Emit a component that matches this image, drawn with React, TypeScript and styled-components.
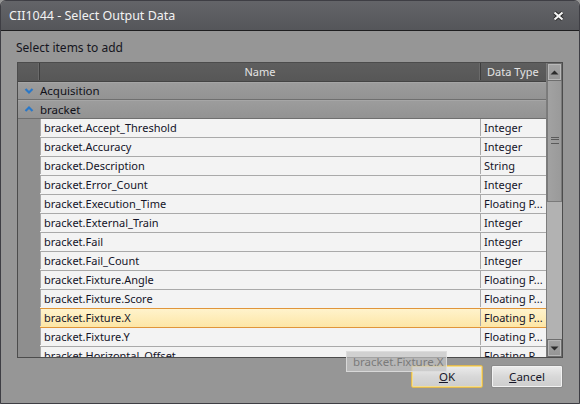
import React from "react";
import styled, { createGlobalStyle } from "styled-components";

const GlobalStyle = createGlobalStyle`
  html, body {
    margin: 0;
    padding: 0;
    background: #969696;
  }
  * {
    box-sizing: border-box;
  }
`;

const FONT = `"Noto Sans", "Open Sans", "DejaVu Sans", sans-serif`;

const Window = styled.div`
  position: relative;
  width: 580px;
  height: 404px;
  background: #969696;
  border: 1px solid #3e3e44;
  border-radius: 6px 6px 0 0;
  overflow: hidden;
  display: flex;
  flex-direction: column;
  font-family: ${FONT};
  font-size: 11px;
`;

const TitleBar = styled.div`
  height: 30px;
  flex: none;
  display: flex;
  align-items: center;
  justify-content: space-between;
  padding: 0 15px 0 8px;
  background: linear-gradient(#636468, #55565a);
  border-bottom: 1px solid #1e1e20;
  color: #f2f2f2;
  font-size: 12.5px;
`;

const CloseButton = styled.button`
  width: 12px;
  height: 12px;
  padding: 0;
  border: none;
  background: none;
  display: flex;
  align-items: center;
  justify-content: center;
`;

const Body = styled.div`
  flex: 1;
  display: flex;
  flex-direction: column;
  padding: 9px 16px 0 15px;
`;

const Label = styled.div`
  color: #151520;
  font-size: 12px;
  line-height: 16px;
  height: 16px;
`;

const Grid = styled.div`
  margin-top: 6px;
  margin-left: 1px;
  width: 546px;
  height: 296px;
  border: 1px solid #4c4c4c;
  display: flex;
  overflow: hidden;
`;

const GridMain = styled.div`
  flex: 1;
  display: flex;
  flex-direction: column;
  overflow: hidden;
  background: #8e8e8e;
`;

const HeaderRow = styled.div`
  height: 19px;
  flex: none;
  display: flex;
  background: linear-gradient(#5e5e5e, #575757);
  border-bottom: 1px solid #444;
  color: #e4e4e4;
  padding-bottom: 1px;
`;

const HeaderCell = styled.div<{ $w?: number; $center?: boolean }>`
  ${(p) => (p.$w ? `width: ${p.$w}px; flex: none;` : "flex: 1;")}
  display: flex;
  align-items: center;
  justify-content: ${(p) => (p.$center ? "center" : "flex-start")};
  padding-left: ${(p) => (p.$center ? 0 : 6)}px;
  border-right: 1px solid #3e3e3e;
  box-shadow: inset -1px 0 0 #6a6a6a;
  &:last-child {
    border-right: none;
    box-shadow: none;
  }
`;

const GroupRow = styled.div<{ $h: number }>`
  height: ${(p) => p.$h}px;
  flex: none;
  display: flex;
  align-items: center;
  padding-bottom: 1px;
  background: linear-gradient(#9c9c9c, #939393);
  border-top: 1px solid #a6a6a6;
  border-bottom: 1px solid #6f6f6f;
  color: #101018;
  font-size: 11.5px;
`;

const GroupIcon = styled.div`
  width: 22px;
  flex: none;
  display: flex;
  justify-content: center;
`;

const DataRow = styled.div<{ $selected?: boolean }>`
  height: 19px;
  flex: none;
  display: flex;
  margin-left: 22px;
  padding-bottom: 1px;
  color: #141428;
  background: ${(p) =>
    p.$selected ? "linear-gradient(#fff3cc, #fde6a6)" : "#f3f3f3"};
  border-bottom: 1px solid ${(p) => (p.$selected ? "#e0953a" : "#a9a9a9")};
  ${(p) => (p.$selected ? "border-top: 1px solid #e0953a; margin-top: -1px; height: 20px;" : "")}
`;

const NameCell = styled.div`
  width: 440px;
  flex: none;
  display: flex;
  align-items: center;
  padding-left: 3px;
  white-space: nowrap;
  border-left: 1px solid #a9a9a9;
`;

const TypeCell = styled.div`
  flex: 1;
  display: flex;
  align-items: center;
  padding-left: 3px;
  white-space: nowrap;
  overflow: hidden;
  border-left: 1px solid #a9a9a9;
`;

const ScrollBar = styled.div`
  width: 16px;
  flex: none;
  display: flex;
  flex-direction: column;
  background: #b2b2b2;
  border-left: 1px solid #7c7c7c;
`;

const ScrollButton = styled.div`
  height: 18px;
  flex: none;
  display: flex;
  align-items: center;
  justify-content: center;
  background: linear-gradient(#a4a4a4, #959595);
  border: 1px solid #6e6e6e;
  box-shadow: inset 0 0 0 1px #b8b8b8;
`;

const Thumb = styled.div`
  height: 121px;
  flex: none;
  display: flex;
  align-items: center;
  justify-content: center;
  background: linear-gradient(90deg, #a2a2a2, #9a9a9a);
  border: 1px solid #7a7a7a;
  border-top: none;
  margin-bottom: auto;
`;

const Grip = styled.div`
  width: 8px;
  height: 7px;
  border-top: 1px solid #5a5a5a;
  border-bottom: 1px solid #5a5a5a;
  position: relative;
  margin-top: -1px;
  &::after {
    content: "";
    position: absolute;
    left: 0;
    right: 0;
    top: 1px;
    height: 3px;
    border-bottom: 1px solid #5a5a5a;
    border-top: 1px solid #5a5a5a;
  }
`;

const Footer = styled.div`
  display: flex;
  justify-content: flex-end;
  gap: 8px;
  margin-top: 7px;
`;

const Button = styled.button<{ $focused?: boolean }>`
  width: 72px;
  height: 23px;
  padding: 0;
  font-family: ${FONT};
  font-size: 11.5px;
  color: #161628;
  background: linear-gradient(#ececec, #d8d8d8 50%, #cdcdcd);
  border: 1px solid ${(p) => (p.$focused ? "#e2b94f" : "#8a8a8a")};
  box-shadow: inset 0 0 0 1px ${(p) => (p.$focused ? "#f4dd8c" : "#f2f2f2")};
  border-radius: 2px;
  u {
    text-decoration: underline;
  }
`;

const Tooltip = styled.div`
  position: absolute;
  left: 345px;
  top: 350px;
  width: 101px;
  height: 21px;
  padding-left: 6px;
  display: flex;
  align-items: center;
  background: rgba(196, 196, 196, 0.72);
  border: 1px solid rgba(222, 222, 222, 0.85);
  color: #7a7a7a;
  font-size: 11.5px;
`;

const Chevron = ({ up }: { up?: boolean }) => (
  <svg width="10" height="8" viewBox="0 0 10 8">
    <path
      d={up ? "M1.5 6 L5 2.5 L8.5 6" : "M1.5 2 L5 5.5 L8.5 2"}
      fill="none"
      stroke="#2a78c8"
      strokeWidth="2.2"
    />
  </svg>
);

const Arrow = ({ up }: { up?: boolean }) => (
  <svg width="9" height="5" viewBox="0 0 9 5">
    <path d={up ? "M0.5 4.5 L4.5 0.5 L8.5 4.5 Z" : "M0.5 0.5 L4.5 4.5 L8.5 0.5 Z"} fill="#2c2c2c" />
  </svg>
);

const rows: [string, string][] = [
  ["bracket.Accept_Threshold", "Integer"],
  ["bracket.Accuracy", "Integer"],
  ["bracket.Description", "String"],
  ["bracket.Error_Count", "Integer"],
  ["bracket.Execution_Time", "Floating P..."],
  ["bracket.External_Train", "Integer"],
  ["bracket.Fail", "Integer"],
  ["bracket.Fail_Count", "Integer"],
  ["bracket.Fixture.Angle", "Floating P..."],
  ["bracket.Fixture.Score", "Floating P..."],
  ["bracket.Fixture.X", "Floating P..."],
  ["bracket.Fixture.Y", "Floating P..."],
  ["bracket.Horizontal_Offset", "Floating P..."],
];

export default function App() {
  return (
    <>
      <GlobalStyle />
      <Window>
        <TitleBar>
          <span>CII1044 - Select Output Data</span>
          <CloseButton>
            <svg width="11" height="10" viewBox="0 0 11 10">
              <path d="M1.5 1.5 L9.5 8.5 M9.5 1.5 L1.5 8.5" stroke="#2a2a2a" strokeWidth="4" />
              <path d="M1.5 1.5 L9.5 8.5 M9.5 1.5 L1.5 8.5" stroke="#f4f4f4" strokeWidth="2.2" />
            </svg>
          </CloseButton>
        </TitleBar>
        <Body>
          <Label>Select items to add</Label>
          <Grid>
            <GridMain>
              <HeaderRow>
                <HeaderCell $w={22} />
                <HeaderCell $w={441} $center>
                  Name
                </HeaderCell>
                <HeaderCell>Data Type</HeaderCell>
              </HeaderRow>
              <GroupRow $h={18}>
                <GroupIcon>
                  <Chevron />
                </GroupIcon>
                Acquisition
              </GroupRow>
              <GroupRow $h={19}>
                <GroupIcon>
                  <Chevron up />
                </GroupIcon>
                bracket
              </GroupRow>
              {rows.map(([name, type]) => (
                <DataRow key={name} $selected={name === "bracket.Fixture.X"}>
                  <NameCell>{name}</NameCell>
                  <TypeCell>{type}</TypeCell>
                </DataRow>
              ))}
            </GridMain>
            <ScrollBar>
              <ScrollButton>
                <Arrow up />
              </ScrollButton>
              <Thumb>
                <Grip />
              </Thumb>
              <ScrollButton>
                <Arrow />
              </ScrollButton>
            </ScrollBar>
          </Grid>
          <Footer>
            <Button $focused>
              <u>O</u>K
            </Button>
            <Button>
              <u>C</u>ancel
            </Button>
          </Footer>
        </Body>
        <Tooltip>bracket.Fixture.X</Tooltip>
      </Window>
    </>
  );
}
